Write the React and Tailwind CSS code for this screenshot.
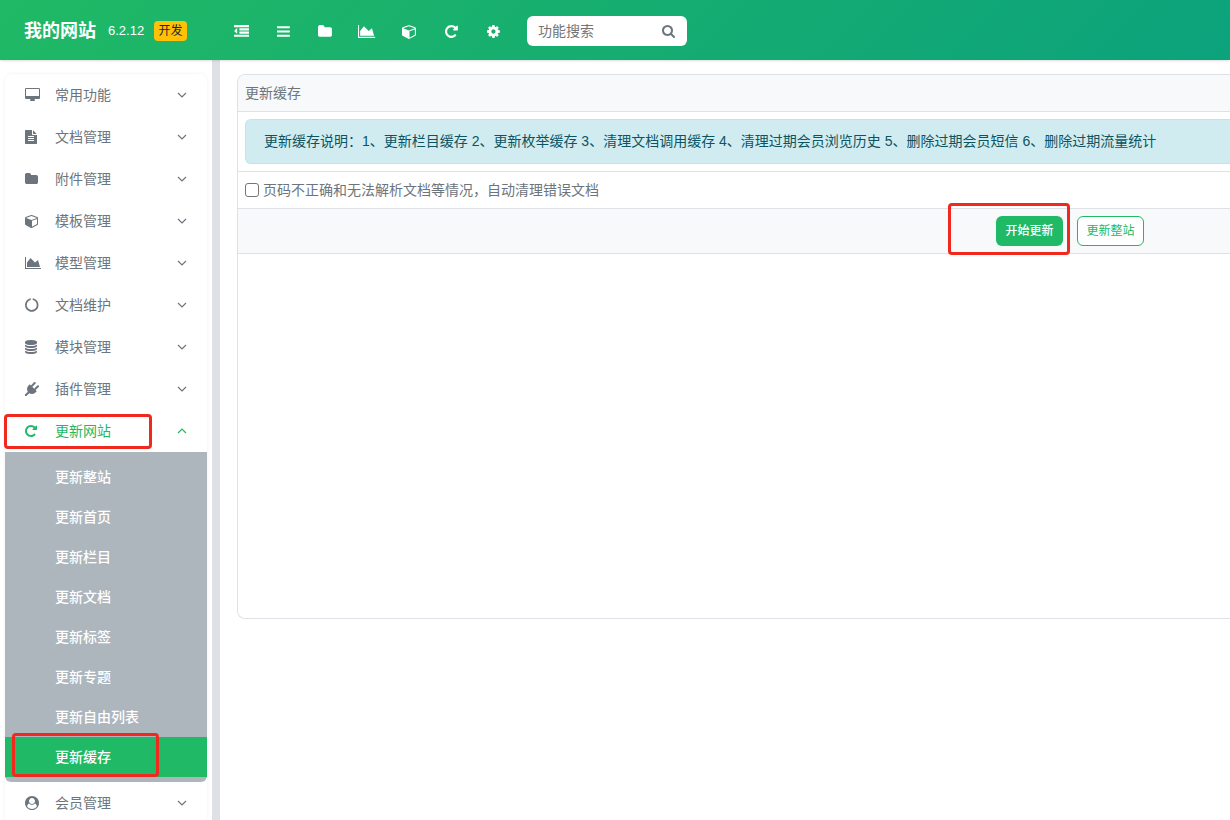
import React from 'react'

// [x offset, view width, path], all drawn on an 1792-unit high grid
const ICONS = {
  outdent: [0, 1792, 'M384 544v576q0 13-9.5 22.5t-22.5 9.5q-14 0-23-9l-288-288q-9-9-9-23t9-23l288-288q9-9 23-9 13 0 22.5 9.5t9.5 22.5zm1408 768v192q0 13-9.5 22.5t-22.5 9.5h-1728q-13 0-22.5-9.5t-9.5-22.5v-192q0-13 9.5-22.5t22.5-9.5h1728q13 0 22.5 9.5t9.5 22.5zm0-384v192q0 13-9.5 22.5t-22.5 9.5h-1088q-13 0-22.5-9.5t-9.5-22.5v-192q0-13 9.5-22.5t22.5-9.5h1088q13 0 22.5 9.5t9.5 22.5zm0-384v192q0 13-9.5 22.5t-22.5 9.5h-1088q-13 0-22.5-9.5t-9.5-22.5v-192q0-13 9.5-22.5t22.5-9.5h1088q13 0 22.5 9.5t9.5 22.5zm0-384v192q0 13-9.5 22.5t-22.5 9.5h-1728q-13 0-22.5-9.5t-9.5-22.5v-192q0-13 9.5-22.5t22.5-9.5h1728q13 0 22.5 9.5t9.5 22.5z'],
  bars: [128, 1536, 'M1664 1344v128q0 26-19 45t-45 19h-1408q-26 0-45-19t-19-45v-128q0-26 19-45t45-19h1408q26 0 45 19t19 45zm0-512v128q0 26-19 45t-45 19h-1408q-26 0-45-19t-19-45v-128q0-26 19-45t45-19h1408q26 0 45 19t19 45zm0-512v128q0 26-19 45t-45 19h-1408q-26 0-45-19t-19-45v-128q0-26 19-45t45-19h1408q26 0 45 19t19 45z'],
  folder: [64, 1664, 'M1728 608v704q0 92-66 158t-158 66h-1216q-92 0-158-66t-66-158v-960q0-92 66-158t158-66h320q92 0 158 66t66 158v32h672q92 0 158 66t66 158z'],
  chart: [0, 2048, 'M2048 1536v128h-2048v-1536h128v1408h1920zm-384-1024l256 896h-1664v-576l448-576 576 576z'],
  cube: [0, 1664, 'M896 1629l640-349v-636l-640 233v752zm-64-865l698-254-698-254-698 254zm832-252v768q0 35-18 65t-49 47l-704 384q-28 16-61 16t-61-16l-704-384q-31-17-49-47t-18-65v-768q0-40 23-73t61-47l704-256q22-8 44-8t44 8l704 256q38 14 61 47t23 73z'],
  repeat: [128, 1536, 'M1664 256v448q0 26-19 45t-45 19h-448q-42 0-59-40-17-39 14-69l138-138q-148-137-349-137-104 0-198.5 40.5t-163.5 109.5-109.5 163.5-40.5 198.5 40.5 198.5 109.5 163.5 163.5 109.5 198.5 40.5q119 0 225-52t179-147q7-10 23-12 15 0 25 9l137 138q9 8 9.5 20.5t-7.5 22.5q-109 132-264 204.5t-327 72.5q-156 0-298-61t-245-164-164-245-61-298 61-298 164-245 245-164 298-61q147 0 284.5 55.5t244.5 156.5l130-129q29-31 70-14 39 17 39 59z'],
  cog: [128, 1536, 'M1152 896q0-106-75-181t-181-75-181 75-75 181 75 181 181 75 181-75 75-181zm512-109v222q0 12-8 23t-20 13l-185 28q-19 54-39 91 35 50 107 138 10 12 10 25t-9 23q-27 37-99 108t-94 71q-12 0-26-9l-138-108q-44 23-91 38-16 136-29 186-7 28-36 28h-222q-14 0-24.5-8.5t-11.5-21.5l-28-184q-49-16-90-37l-141 107q-10 9-25 9-14 0-25-11-126-114-165-168-7-10-7-23 0-12 8-23 15-21 51-66.5t54-70.5q-27-50-41-99l-183-27q-13-2-21-12.5t-8-23.5v-222q0-12 8-23t19-13l186-28q14-46 39-92-40-57-107-138-10-12-10-24 0-10 9-23 26-36 98.5-107.5t94.5-71.5q13 0 26 10l138 107q44-23 91-38 16-136 29-186 7-28 36-28h222q14 0 24.5 8.5t11.5 21.5l28 184q49 16 90 37l142-107q9-9 24-9 13 0 25 10 129 119 165 170 7 8 7 22 0 12-8 23-15 21-51 66.5t-54 70.5q26 50 41 98l183 28q13 2 21 12.5t8 23.5z'],
  search: [64, 1664, 'M1216 832q0-185-131.5-316.5t-316.5-131.5-316.5 131.5-131.5 316.5 131.5 316.5 316.5 131.5 316.5-131.5 131.5-316.5zm512 832q0 52-38 90t-90 38q-54 0-90-38l-343-342q-179 124-399 124-143 0-273.5-55.5t-225-150-150-225-55.5-273.5 55.5-273.5 150-225 225-150 273.5-55.5 273.5 55.5 225 150 150 225 55.5 273.5q0 220-124 399l343 343q37 37 37 90z'],
  desktop: [-64, 1920, 'M1728 992v-832q0-13-9.5-22.5t-22.5-9.5h-1600q-13 0-22.5 9.5t-9.5 22.5v832q0 13 9.5 22.5t22.5 9.5h1600q13 0 22.5-9.5t9.5-22.5zm128-832v1088q0 66-47 113t-113 47h-544q0 37 16 77.5t32 71 16 43.5q0 26-19 45t-45 19h-512q-26 0-45-19t-19-45q0-14 16-44t32-70 16-78h-544q-66 0-113-47t-47-113v-1088q0-66 47-113t113-47h1600q66 0 113 47t47 113z'],
  file: [128, 1536, 'M1596 476q14 14 28 36h-472v-472q22 14 36 28zm-476 164h544v1056q0 40-28 68t-68 28h-1344q-40 0-68-28t-28-68v-1600q0-40 28-68t68-28h800v544q0 40 28 68t68 28zm160 736v-64q0-14-9-23t-23-9h-704q-14 0-23 9t-9 23v64q0 14 9 23t23 9h704q14 0 23-9t9-23zm0-256v-64q0-14-9-23t-23-9h-704q-14 0-23 9t-9 23v64q0 14 9 23t23 9h704q14 0 23-9t9-23zm0-256v-64q0-14-9-23t-23-9h-704q-14 0-23 9t-9 23v64q0 14 9 23t23 9h704q14 0 23-9t9-23z'],
  notch: [32, 1728, 'M1760 896q0 176-68.5 336t-184 275.5-275.5 184-336 68.5-336-68.5-275.5-184-184-275.5-68.5-336q0-213 97-398.5t265-305.5 374-151v228q-221 45-366.5 221t-145.5 406q0 130 51 248.5t136.5 204 204 136.5 248.5 51 248.5-51 204-136.5 136.5-204 51-248.5q0-230-145.5-406t-366.5-221v-228q206 31 374 151t265 305.5 97 398.5z'],
  database: [128, 1536, 'M896 768q237 0 443-43t325-127v170q0 69-103 128t-280 93.5-385 34.5-385-34.5-280-93.5-103-128v-170q119 84 325 127t443 43zm0 768q237 0 443-43t325-127v170q0 69-103 128t-280 93.5-385 34.5-385-34.5-280-93.5-103-128v-170q119 84 325 127t443 43zm0-384q237 0 443-43t325-127v170q0 69-103 128t-280 93.5-385 34.5-385-34.5-280-93.5-103-128v-170q119 84 325 127t443 43zm0-1152q208 0 385 34.5t280 93.5 103 128v128q0 69-103 128t-280 93.5-385 34.5-385-34.5-280-93.5-103-128v-128q0-69 103-128t280-93.5 385-34.5z'],
  plug: [0, 1792, 'M1755 453q37 38 37 90.5t-37 90.5l-401 400 150 150-160 160q-163 163-389.5 186.5t-411.5-100.5l-362 362h-181v-181l362-362q-124-185-100.5-411.5t186.5-389.5l160-160 150 150 400-401q38-37 91-37t90 37 37 90.5-37 90.5l-400 401 234 234 401-400q38-37 91-37t90 37z'],
  // disc with the head and shoulders cut out
  user: [0, 1792, 'M1523 1339q-22-155-87.5-257.5t-184.5-118.5q-67 74-159.5 115.5t-195.5 41.5-195.5-41.5-159.5-115.5q-119 16-184.5 118.5t-87.5 257.5q106 150 271 237.5t356 87.5 356-87.5 271-237.5zm-243-699q0-159-112.5-271.5t-271.5-112.5-271.5 112.5-112.5 271.5 112.5 271.5 271.5 112.5 271.5-112.5 112.5-271.5zm512 256q0 182-71 347.5t-190.5 286-285.5 191.5-349 71-349-71-285.5-191.5-190.5-286-71-347.5 71-348 191-286 286-191 348-71 348 71 286 191 191 286 71 348z'],
}

const TOOLS = [
  { icon: 'outdent', label: '收起菜单' },
  { icon: 'bars', label: '栏目' },
  { icon: 'folder', label: '附件' },
  { icon: 'chart', label: '模型' },
  { icon: 'cube', label: '模板' },
  { icon: 'repeat', label: '更新' },
  { icon: 'cog', label: '设置' },
]

const MENU = [
  { icon: 'desktop', label: '常用功能' },
  { icon: 'file', label: '文档管理' },
  { icon: 'folder', label: '附件管理' },
  { icon: 'cube', label: '模板管理' },
  { icon: 'chart', label: '模型管理' },
  { icon: 'notch', label: '文档维护' },
  { icon: 'database', label: '模块管理' },
  { icon: 'plug', label: '插件管理' },
  {
    icon: 'repeat',
    label: '更新网站',
    children: ['更新整站', '更新首页', '更新栏目', '更新文档', '更新标签', '更新专题', '更新自由列表', '更新缓存'],
  },
  { icon: 'user', label: '会员管理' },
]

const ACTIVE = '更新缓存'

function Icon({ name, className = 'h-3.5' }) {
  const [x, width, d] = ICONS[name]
  return (
    <svg viewBox={`${x} 0 ${width} 1792`} className={`block w-auto shrink-0 overflow-visible ${className}`} fill="currentColor" aria-hidden="true">
      <path d={d} />
    </svg>
  )
}

function Chevron({ up }) {
  return (
    <svg viewBox="0 0 10 10" className="w-2.5 h-2.5 shrink-0" fill="none" stroke="currentColor" strokeWidth="1.2" aria-hidden="true">
      <path d={up ? 'M1 7l4-4 4 4' : 'M1 3l4 4 4-4'} />
    </svg>
  )
}

// red frame laid over the thing it points at
function Marker({ className }) {
  return <span className={`absolute z-10 rounded-sm border-3 border-[#f0281e] pointer-events-none ${className}`} />
}

function Header() {
  return (
    <header className="relative z-10 flex items-center h-15 pt-0.5 pl-6 text-white bg-linear-[135deg,#20b965,#0ca27c] shadow-sm">
      <h1 className="w-[76px] text-lg font-bold whitespace-nowrap">我的网站</h1>
      <span className="w-[44px] ml-2 text-[13px]">6.2.12</span>
      <span className="w-[33px] h-5 ml-0.5 rounded bg-[#ffc107] text-center text-xs leading-5 text-[#212529]">开发</span>
      <nav className="flex items-center ml-[33px]">
        {TOOLS.map((t) => (
          <button key={t.icon} type="button" aria-label={t.label} className="flex justify-center w-[42px]">
            <Icon name={t.icon} className="h-[15px]" />
          </button>
        ))}
      </nav>
      <form className="flex items-center w-40 h-[30px] ml-[13px] pl-[11px] pr-3 rounded-md bg-white">
        <input
          type="text"
          aria-label="功能搜索"
          placeholder="功能搜索"
          className="flex-1 min-w-0 text-sm text-gray-800 placeholder:text-[#757575] outline-none"
        />
        <button type="button" aria-label="搜索" className="text-[#6c757d]">
          <Icon name="search" />
        </button>
      </form>
    </header>
  )
}

function MenuItem({ item }) {
  const open = Boolean(item.children)
  return (
    <li>
      <button
        type="button"
        aria-expanded={open}
        className={`relative flex items-center w-full h-[42px] px-5 text-left ${open ? 'text-[#20b965]' : 'text-[#6c757d]'}`}
      >
        <span className="w-[30px]"><Icon name={item.icon} /></span>
        <span className="flex-1">{item.label}</span>
        <Chevron up={open} />
        {open && <Marker className="-left-px top-1 w-[148px] h-[35px]" />}
      </button>
      {open && (
        <ul className="py-[5px] rounded-b-md bg-[#adb5bd] text-white font-medium">
          {item.children.map((label) => (
            <li key={label} className="relative">
              <a
                href="#"
                className={`block h-10 pl-[50px] leading-10 ${label === ACTIVE ? 'bg-[#20b965]' : ''}`}
              >
                {label}
              </a>
              {label === ACTIVE && <Marker className="left-[7px] -top-1 w-[147px] h-11" />}
            </li>
          ))}
        </ul>
      )}
    </li>
  )
}

function Sidebar() {
  return (
    <aside className="w-[220px] shrink-0 pt-3.5 px-[5px] border-r-8 border-[#dee2e6]">
      <ul className="rounded-lg shadow-[0_0_4px_rgba(0,0,0,0.06)]">
        {MENU.map((item) => <MenuItem key={item.label} item={item} />)}
      </ul>
    </aside>
  )
}

function CachePanel() {
  return (
    <section className="h-[545px] border border-r-0 border-[#dee2e6] rounded-l-lg overflow-hidden">
      <h2 className="h-9 px-[7px] leading-9 bg-[#f8f9fa]">更新缓存</h2>
      <div className="py-[7px] pl-[7px] border-t border-[#dee2e6]">
        <p className="h-[45px] pl-[18px] border border-r-0 border-[#bee5eb] rounded-l-md bg-[#d1ecf1] text-[#0c5460] leading-[43px] whitespace-nowrap">
          更新缓存说明：1、更新栏目缓存 2、更新枚举缓存 3、清理文档调用缓存 4、清理过期会员浏览历史 5、删除过期会员短信 6、删除过期流量统计
        </p>
      </div>
      <label className="flex items-center gap-1 h-[37px] px-[7px] border-t border-[#dee2e6]">
        <input type="checkbox" className="appearance-none w-3.5 h-3.5 border border-[#767676] rounded-[3px] bg-white" />
        页码不正确和无法解析文档等情况，自动清理错误文档
      </label>
      <div className="flex justify-end gap-3.5 py-[7px] pr-[86px] border-y border-[#dee2e6] bg-[#f8f9fa] text-xs">
        <div className="relative">
          <button type="button" className="w-[67px] h-[30px] rounded-md bg-[#20b965] text-white font-medium">开始更新</button>
          <Marker className="-left-12 -top-[13px] w-[122px] h-[52px]" />
        </div>
        <button type="button" className="w-[67px] h-[30px] rounded-md border border-[#20b965] bg-white text-[#20b965]">更新整站</button>
      </div>
    </section>
  )
}

export default function App() {
  return (
    <div className="flex flex-col h-screen overflow-hidden bg-white text-sm text-[#6c757d] font-['Liberation_Sans','Noto_Sans_CJK_SC',sans-serif]">
      <Header />
      <div className="flex flex-1 min-h-0">
        <Sidebar />
        <main className="flex-1 min-w-0 pt-3.5 pl-[17px]">
          <CachePanel />
        </main>
      </div>
    </div>
  )
}
